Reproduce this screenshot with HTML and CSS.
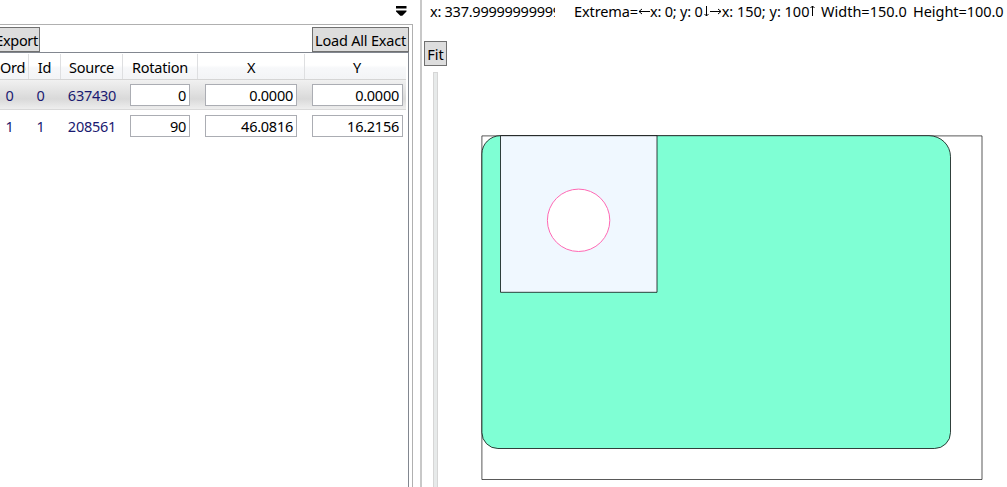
FILE: index.html
```html
<!DOCTYPE html>
<html lang="en">
<head>
<meta charset="utf-8">
<title>Layout</title>
<link rel="stylesheet" href="styles.css">
</head>
<body>
<div class="app">
  <section class="left">
    <div class="bar"><svg class="menu" width="12" height="10" viewBox="0 0 12 10"><path d="M1 0H11.5V2.5H1ZM1 4.5H11.5V5.5L7.3 9.8H5.3L1 5.5Z" fill="#000"/></svg></div>
    <div class="pane">
      <div class="tools"><button class="btn export"><span>Export</span></button><button class="btn load">Load All Exact</button></div>
      <div class="table">
        <div class="row head"><div class="order"><div class="clip">Order</div></div><div>Id</div><div>Source</div><div>Rotation</div><div>X</div><div>Y</div></div>
        <div class="row item selected"><div>0</div><div>0</div><div>637430</div><div class="box">0</div><div class="box">0.0000</div><div class="box">0.0000</div></div>
        <div class="row item"><div>1</div><div>1</div><div>208561</div><div class="box">90</div><div class="box">46.0816</div><div class="box">16.2156</div></div>
      </div>
    </div>
  </section>
  <section class="right">
    <div class="status"><span class="pos">x: 337.9999999999999</span><span class="extrema"><span class="label">Extrema=</span><svg width="12" height="9" viewBox="0 0 12 9"><path d="M1 4.5H12M4 2L1 4.5L4 7"/></svg><span class="low">x: 0; y: 0</span><svg width="7" height="13" viewBox="0 0 7 13"><path d="M3.5 1V11M1.5 9L3.5 11L5.5 9"/></svg><svg width="12" height="9" viewBox="0 0 12 9"><path d="M0 4.5H11M8 2L11 4.5L8 7"/></svg><span class="high">x: 150; y: 100</span><svg width="7" height="13" viewBox="0 0 7 13"><path d="M3.5 11V1M1.5 3L3.5 1L5.5 3"/></svg></span><span class="width">Width=150.0</span><span class="height">Height=100.0</span></div>
    <div class="work">
      <div class="side"><button class="btn fit">Fit</button><div class="track"></div></div>
      <svg class="drawing" width="502" height="346" viewBox="481 135 502 346">
        <path d="M481.9 135.9H982V479.5H481.9Z" fill="#fff" stroke="#000" stroke-opacity=".65"/>
        <path d="M500.5 135.7H929A21.5 21 0 0 1 950.5 156.7V432.5A16 16 0 0 1 934.5 448.5H497.9A16 16 0 0 1 481.9 432.5V153.9A18.6 18.2 0 0 1 500.5 135.7Z" fill="#7fffd4" stroke="#000" stroke-width=".75"/>
        <path d="M500.5 135.7H657V292.3H500.5Z" fill="#f0f8ff" stroke="#000" stroke-width=".75"/>
        <circle cx="578.6" cy="220.3" r="31.2" fill="#fff" stroke="#ff69b4"/>
      </svg>
    </div>
  </section>
</div>
</body>
</html>
```
FILE: styles.css
```css
* { box-sizing: border-box; }
body { margin: 0; overflow: hidden; background: #fff; color: #000; font: 14.5px/20px "Noto Sans", "Open Sans", sans-serif; }
.app { display: flex; width: 1007px; height: 487px; }
.left { width: 420px; display: flex; flex-direction: column; }
.bar { height: 24px; display: flex; justify-content: flex-end; padding: 6px 13px 0 0; }
.menu { display: block; }
.pane { width: 413px; flex: 1; display: flex; flex-direction: column; border: solid #b0b0b0; border-width: 1px 1px 0 0; }
.tools { height: 27px; display: flex; justify-content: space-between; padding: 2px 3px 0 0; }
.btn { height: 25px; padding: 0; border: 1px solid #707070; background: #ddd; color: #000; font: inherit; line-height: 25px; white-space: nowrap; }
.export { width: 40px; border-left: 0; overflow: hidden; display: flex; justify-content: flex-end; padding-right: 1px; letter-spacing: -.3px; }
.load { width: 97px; letter-spacing: -.2px; }
.table { width: 409px; flex: 1; border: solid #828790; border-width: 1px 1px 0 0; padding: 1px 2px 0 0; }
.row { display: grid; grid-template-columns: 29px 32px 62px 75px 107px 101px; text-align: center; letter-spacing: -.25px; }
.head { height: 26px; line-height: 27px; background: linear-gradient(#fff 45%, #f7f8fa 55%, #f3f4f6); border-bottom: 1px solid #d5d5d5; }
.head > div { border-right: 1px solid #dedfe1; overflow: hidden; }
.head > div:last-child { border: 0; padding-left: 3px; }
.order { text-align: left; }
.clip { width: 26px; overflow: hidden; }
.item { height: 31px; padding-top: 4px; color: #191970; line-height: 23px; }
.item > div:first-child { padding-right: 10px; }
.item > div:nth-child(2) { padding-right: 9px; }
.selected { height: 30px; background: linear-gradient(#f1f1f1, #d9d9d9 65%, #eee); border-bottom: 1px solid #d9d9d9; }
.item:last-child { padding-top: 5px; }
.box { height: 22px; margin: 0 8px 0 7px; border: 1px solid #abadb3; background: #fff; color: #000; text-align: right; padding-right: 3px; line-height: 21px; }
.box:last-child { margin: 0 3px 0 7px; }
.right { flex: 1; border-left: 2px solid #c8c8c8; min-width: 0; }
.status { height: 24px; display: flex; align-items: center; padding: 0 0 2px 8px; white-space: nowrap; letter-spacing: -.25px; }
.pos { width: 125px; overflow: hidden; margin-right: 19px; }
.extrema { display: flex; align-items: center; width: 241px; margin-right: 6px; }
.extrema svg { flex: none; fill: none; stroke: #000; }
.label { letter-spacing: -.1px; }
.low { letter-spacing: -.2px; }
.high { letter-spacing: 0; }
.width { width: 92px; letter-spacing: 0; }
.height { width: 92px; letter-spacing: -.05px; }
.work { display: flex; }
.side { width: 59px; padding: 17px 0 0 2px; }
.fit { width: 23px; display: block; }
.track { width: 5px; height: 421px; margin: 6px 0 0 9px; background: #e7eaea; border: 1px solid #d6d6d6; }
.drawing { display: block; margin-top: 111px; }
```
